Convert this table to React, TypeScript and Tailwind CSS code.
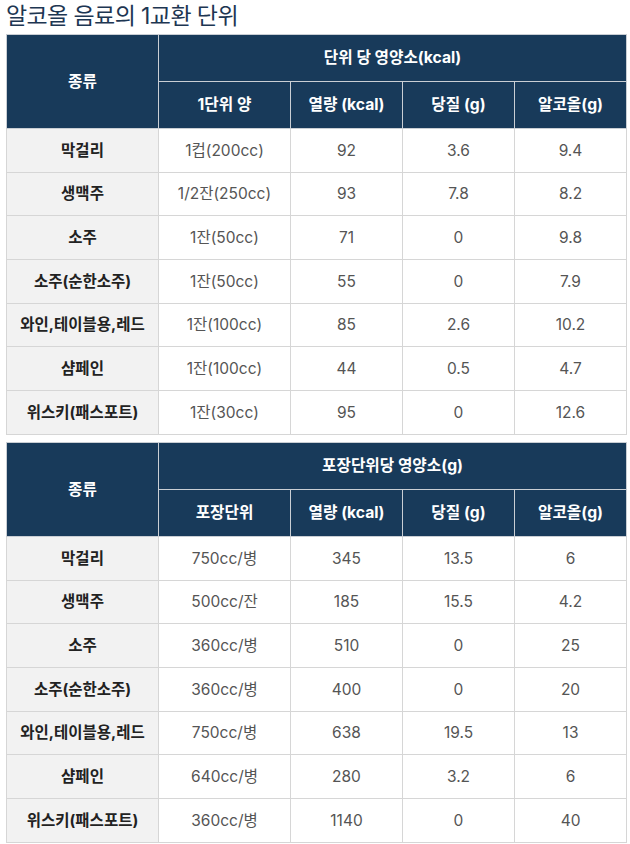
const font = { fontFamily: 'Inter, "Noto Sans CJK KR", sans-serif' };

type Row = [string, string, string, string, string];

const unitRows: Row[] = [
    ['막걸리', '1컵(200cc)', '92', '3.6', '9.4'],
    ['생맥주', '1/2잔(250cc)', '93', '7.8', '8.2'],
    ['소주', '1잔(50cc)', '71', '0', '9.8'],
    ['소주(순한소주)', '1잔(50cc)', '55', '0', '7.9'],
    ['와인,테이블용,레드', '1잔(100cc)', '85', '2.6', '10.2'],
    ['샴페인', '1잔(100cc)', '44', '0.5', '4.7'],
    ['위스키(패스포트)', '1잔(30cc)', '95', '0', '12.6'],
];

const packRows: Row[] = [
    ['막걸리', '750cc/병', '345', '13.5', '6'],
    ['생맥주', '500cc/잔', '185', '15.5', '4.2'],
    ['소주', '360cc/병', '510', '0', '25'],
    ['소주(순한소주)', '360cc/병', '400', '0', '20'],
    ['와인,테이블용,레드', '750cc/병', '638', '19.5', '13'],
    ['샴페인', '640cc/병', '280', '3.2', '6'],
    ['위스키(패스포트)', '360cc/병', '1140', '0', '40'],
];

const th = 'border border-[#c9ced4] bg-[#183a5a] text-center text-[15.7px] font-bold text-white';
const td = 'border border-[#d6d6d6] text-center text-[15.5px]';

const NutritionTable = ({ title, unitLabel, rows }: { title: string; unitLabel: string; rows: Row[] }) => (
    <table className="w-[620px] table-fixed border-collapse">
        <colgroup>
            <col className="w-[152px]" />
            <col className="w-[132px]" />
            <col className="w-[112px]" />
            <col className="w-[112px]" />
            <col className="w-[112px]" />
        </colgroup>
        <thead>
            <tr className="h-[47px]">
                <th rowSpan={2} className={th}>
                    종류
                </th>
                <th colSpan={4} className={th}>
                    {title}
                </th>
            </tr>
            <tr className="h-[47px]">
                <th className={th}>{unitLabel}</th>
                <th className={th}>열량 (kcal)</th>
                <th className={th}>당질 (g)</th>
                <th className={th}>알코올(g)</th>
            </tr>
        </thead>
        <tbody>
            {rows.map((r) => (
                <tr key={r[0]} className="h-[43.7px]">
                    <td className={`${td} bg-[#f2f2f2] font-bold text-[#222]`}>{r[0]}</td>
                    <td className={`${td} text-[#555]`}>{r[1]}</td>
                    <td className={`${td} text-[#555]`}>{r[2]}</td>
                    <td className={`${td} text-[#555]`}>{r[3]}</td>
                    <td className={`${td} text-[#555]`}>{r[4]}</td>
                </tr>
            ))}
        </tbody>
    </table>
);

export default function App() {
    return (
        <div className="w-[630px] bg-white px-[6px] pt-[3px]" style={font}>
            <h1 className="mb-[4px] text-[23px] leading-[27px] font-normal tracking-[-0.6px] text-[#1d3652]">
                알코올 음료의 1교환 단위
            </h1>
            <div className="flex flex-col gap-[7px]">
                <NutritionTable title="단위 당 영양소(kcal)" unitLabel="1단위 양" rows={unitRows} />
                <NutritionTable title="포장단위당 영양소(g)" unitLabel="포장단위" rows={packRows} />
            </div>
        </div>
    );
}
